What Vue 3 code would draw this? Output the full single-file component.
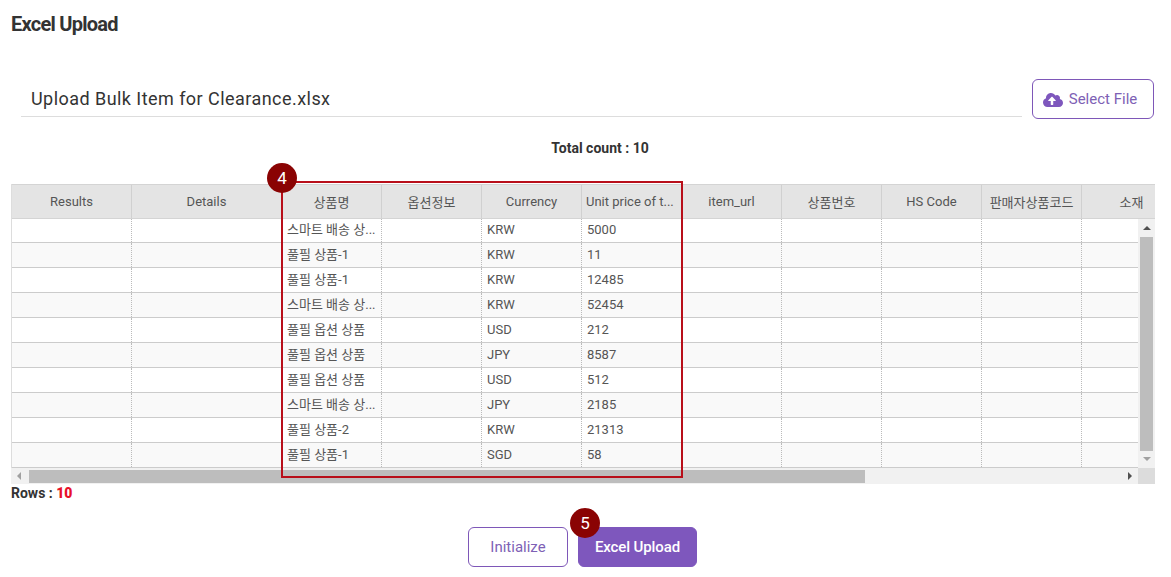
<template>
  <div class="page">
    <h1 class="title">Excel Upload</h1>

    <div class="file-row">
      <div class="file-name">Upload Bulk Item for Clearance.xlsx</div>
      <button class="btn outline select-btn">
        <svg class="cloud" viewBox="0 0 640 512"><path fill="currentColor" d="M537.6 226.6c4.1-10.7 6.4-22.4 6.4-34.6 0-53-43-96-96-96-19.7 0-38.1 6-53.3 16.2C367 64.2 315.3 32 256 32c-88.4 0-160 71.6-160 160 0 2.7.1 5.4.2 8.1C40.2 219.8 0 273.2 0 336c0 79.5 64.5 144 144 144h368c70.7 0 128-57.3 128-128 0-61.9-44-113.6-102.4-125.4zM393.4 288H328v112c0 8.8-7.2 16-16 16h-48c-8.8 0-16-7.2-16-16V288h-65.4c-14.3 0-21.4-17.2-11.3-27.3l105.4-105.4c6.2-6.2 16.4-6.2 22.6 0l105.4 105.4c10.1 10.1 2.9 27.3-11.3 27.3z"/></svg>
        Select File
      </button>
    </div>

    <div class="total">Total count : {{ rows.length }}</div>

    <div class="grid-wrap">
      <div class="grid">
        <div class="head">
          <div v-for="col in columns" :key="col.label" class="hcell" :class="{ clipped: col.clipped }" :style="{ width: col.width + 'px' }">
            <span>{{ col.label }}</span>
          </div>
        </div>
        <div v-for="(row, i) in rows" :key="i" class="row" :class="{ even: i % 2 === 1 }">
          <div v-for="(col, c) in columns" :key="col.label" class="cell" :style="{ width: col.width + 'px' }">
            <span v-if="c === 2">{{ row[0] }}</span>
            <span v-else-if="c === 4">{{ row[1] }}</span>
            <span v-else-if="c === 5">{{ row[2] }}</span>
          </div>
        </div>
      </div>

      <div class="vbar">
        <i class="arrow up"></i>
        <div class="vthumb"></div>
        <i class="arrow down"></i>
      </div>
      <div class="hbar">
        <i class="arrow left"></i>
        <div class="hthumb"></div>
        <i class="arrow right"></i>
      </div>
      <div class="corner"></div>

      <div class="highlight"></div>
      <div class="badge badge-4">4</div>
    </div>

    <div class="rows-count">Rows : <b>{{ rows.length }}</b></div>

    <div class="actions">
      <button class="btn outline">Initialize</button>
      <div class="upload-wrap">
        <button class="btn solid">Excel Upload</button>
        <div class="badge badge-5">5</div>
      </div>
    </div>
  </div>
</template>

<script setup>
const columns = [
  { label: 'Results', width: 120 },
  { label: 'Details', width: 150 },
  { label: '상품명', width: 100 },
  { label: '옵션정보', width: 100 },
  { label: 'Currency', width: 100 },
  { label: 'Unit price of t...', width: 100, clipped: true },
  { label: 'item_url', width: 100 },
  { label: '상품번호', width: 100 },
  { label: 'HS Code', width: 100 },
  { label: '판매자상품코드', width: 100 },
  { label: '소재', width: 100 }
]

const rows = [
  ['스마트 배송 상...', 'KRW', '5000'],
  ['풀필 상품-1', 'KRW', '11'],
  ['풀필 상품-1', 'KRW', '12485'],
  ['스마트 배송 상...', 'KRW', '52454'],
  ['풀필 옵션 상품', 'USD', '212'],
  ['풀필 옵션 상품', 'JPY', '8587'],
  ['풀필 옵션 상품', 'USD', '512'],
  ['스마트 배송 상...', 'JPY', '2185'],
  ['풀필 상품-2', 'KRW', '21313'],
  ['풀필 상품-1', 'SGD', '58']
]
</script>

<style>
html, body { background: #fff; }
</style>

<style scoped>
.page { width: 1171px; height: 577px; overflow: hidden; box-sizing: border-box; padding: 0 17px 0 11px; font-family: Roboto, "Noto Sans CJK KR", sans-serif; color: #333; }
.title { margin: 0; padding-top: 12px; height: 79px; box-sizing: border-box; font-size: 20px; line-height: 24px; font-weight: 700; letter-spacing: -0.75px; color: #333; }
.file-row { display: flex; align-items: flex-start; gap: 10px; padding-left: 10px; }
.file-name { flex: 1; height: 38px; box-sizing: border-box; padding: 8px 0 0 10px; border-bottom: 1px solid #ddd; font-size: 18px; line-height: 24px; letter-spacing: 0.45px; color: #333; }
.btn { box-sizing: border-box; height: 40px; border-radius: 6px; font-family: inherit; font-size: 15px; padding: 0; }
.outline { background: #fff; border: 1px solid #7e57b8; color: #7e61b5; }
.solid { background: #7e57bd; border: 1px solid #7e57bd; color: #fff; font-weight: 500; width: 119px; letter-spacing: -0.1px; }
.select-btn { width: 122px; display: flex; align-items: center; justify-content: center; gap: 6px; flex-shrink: 0; padding-right: 6px; }
.cloud { width: 20px; height: 16px; margin-top: 2px; color: #7e57bd; }
.total { margin-top: 20px; height: 18px; line-height: 18px; text-align: center; font-size: 14px; font-weight: 700; padding-left: 35px; }
.grid-wrap { position: relative; width: 1144px; height: 300px; margin-top: 27px; }
.grid { width: 1144px; height: 300px; box-sizing: border-box; overflow: hidden; border-left: 1px solid #ddd; font-size: 13px; color: #555; }
.head { position: relative; z-index: 1; display: flex; height: 35px; margin-bottom: -1px; box-sizing: border-box; background: #e4e4e4; border-top: 1px solid #d4d4d4; border-bottom: 1px solid #d4d4d4; width: 1170px; }
.hcell { flex-shrink: 0; box-sizing: border-box; display: flex; align-items: center; justify-content: center; border-right: 1px solid #d0d0d0; white-space: nowrap; overflow: hidden; }
.hcell.clipped { justify-content: flex-start; padding-left: 4px; }
.row { display: flex; height: 25px; box-sizing: border-box; background: #fff; border-bottom: 1px solid #ccc; width: 1170px; }
.row.even { background: #f9f9f9; }
.cell { flex-shrink: 0; box-sizing: border-box; padding: 0 5px; line-height: 24px; border-right: 1px dotted #bbb; white-space: nowrap; overflow: hidden; }
.vbar { position: absolute; z-index: 2; left: 1127px; top: 35px; width: 17px; height: 249px; background: #f1f1f1; display: flex; flex-direction: column; align-items: center; }
.vthumb { width: 13px; height: 214px; margin-top: 7px; background: #bdbdbd; flex-shrink: 0; }
.hbar { position: absolute; z-index: 2; left: 0; top: 284px; width: 1127px; height: 16px; background: #f1f1f1; }
.hthumb { position: absolute; left: 18px; top: 2px; width: 836px; height: 13px; background: #bdbdbd; }
.corner { position: absolute; z-index: 2; left: 1127px; top: 284px; width: 17px; height: 16px; background: #dcdcdc; }
.arrow { width: 0; height: 0; display: block; border-style: solid; border-color: transparent; }
.arrow.up { margin-top: 7px; border-width: 0 4px 4px; border-bottom-color: #505050; }
.arrow.down { margin-top: 6px; border-width: 4px 4px 0; border-top-color: #a0a0a0; }
.arrow.left { position: absolute; left: 6px; top: 4px; border-width: 4px 4px 4px 0; border-right-color: #a0a0a0; }
.arrow.right { position: absolute; left: 1117px; top: 4px; border-width: 4px 0 4px 4px; border-left-color: #505050; }
.highlight { position: absolute; z-index: 3; left: 270px; top: -3px; width: 402px; height: 297px; box-sizing: border-box; border: 2px solid #b80f1a; }
.badge { position: absolute; z-index: 4; width: 30px; height: 30px; border-radius: 50%; background: #8a0303; color: #fff; font-size: 17px; font-weight: 400; line-height: 30px; text-align: center; }
.badge-4 { left: 256px; top: -21px; }
.rows-count { height: 18px; line-height: 18px; font-size: 14px; font-weight: 700; }
.rows-count b { color: #e8102a; }
.actions { display: flex; justify-content: center; gap: 10px; margin-top: 25px; }
.actions .outline { width: 100px; }
.upload-wrap { position: relative; }
.badge-5 { left: -8px; top: -19px; }
</style>
